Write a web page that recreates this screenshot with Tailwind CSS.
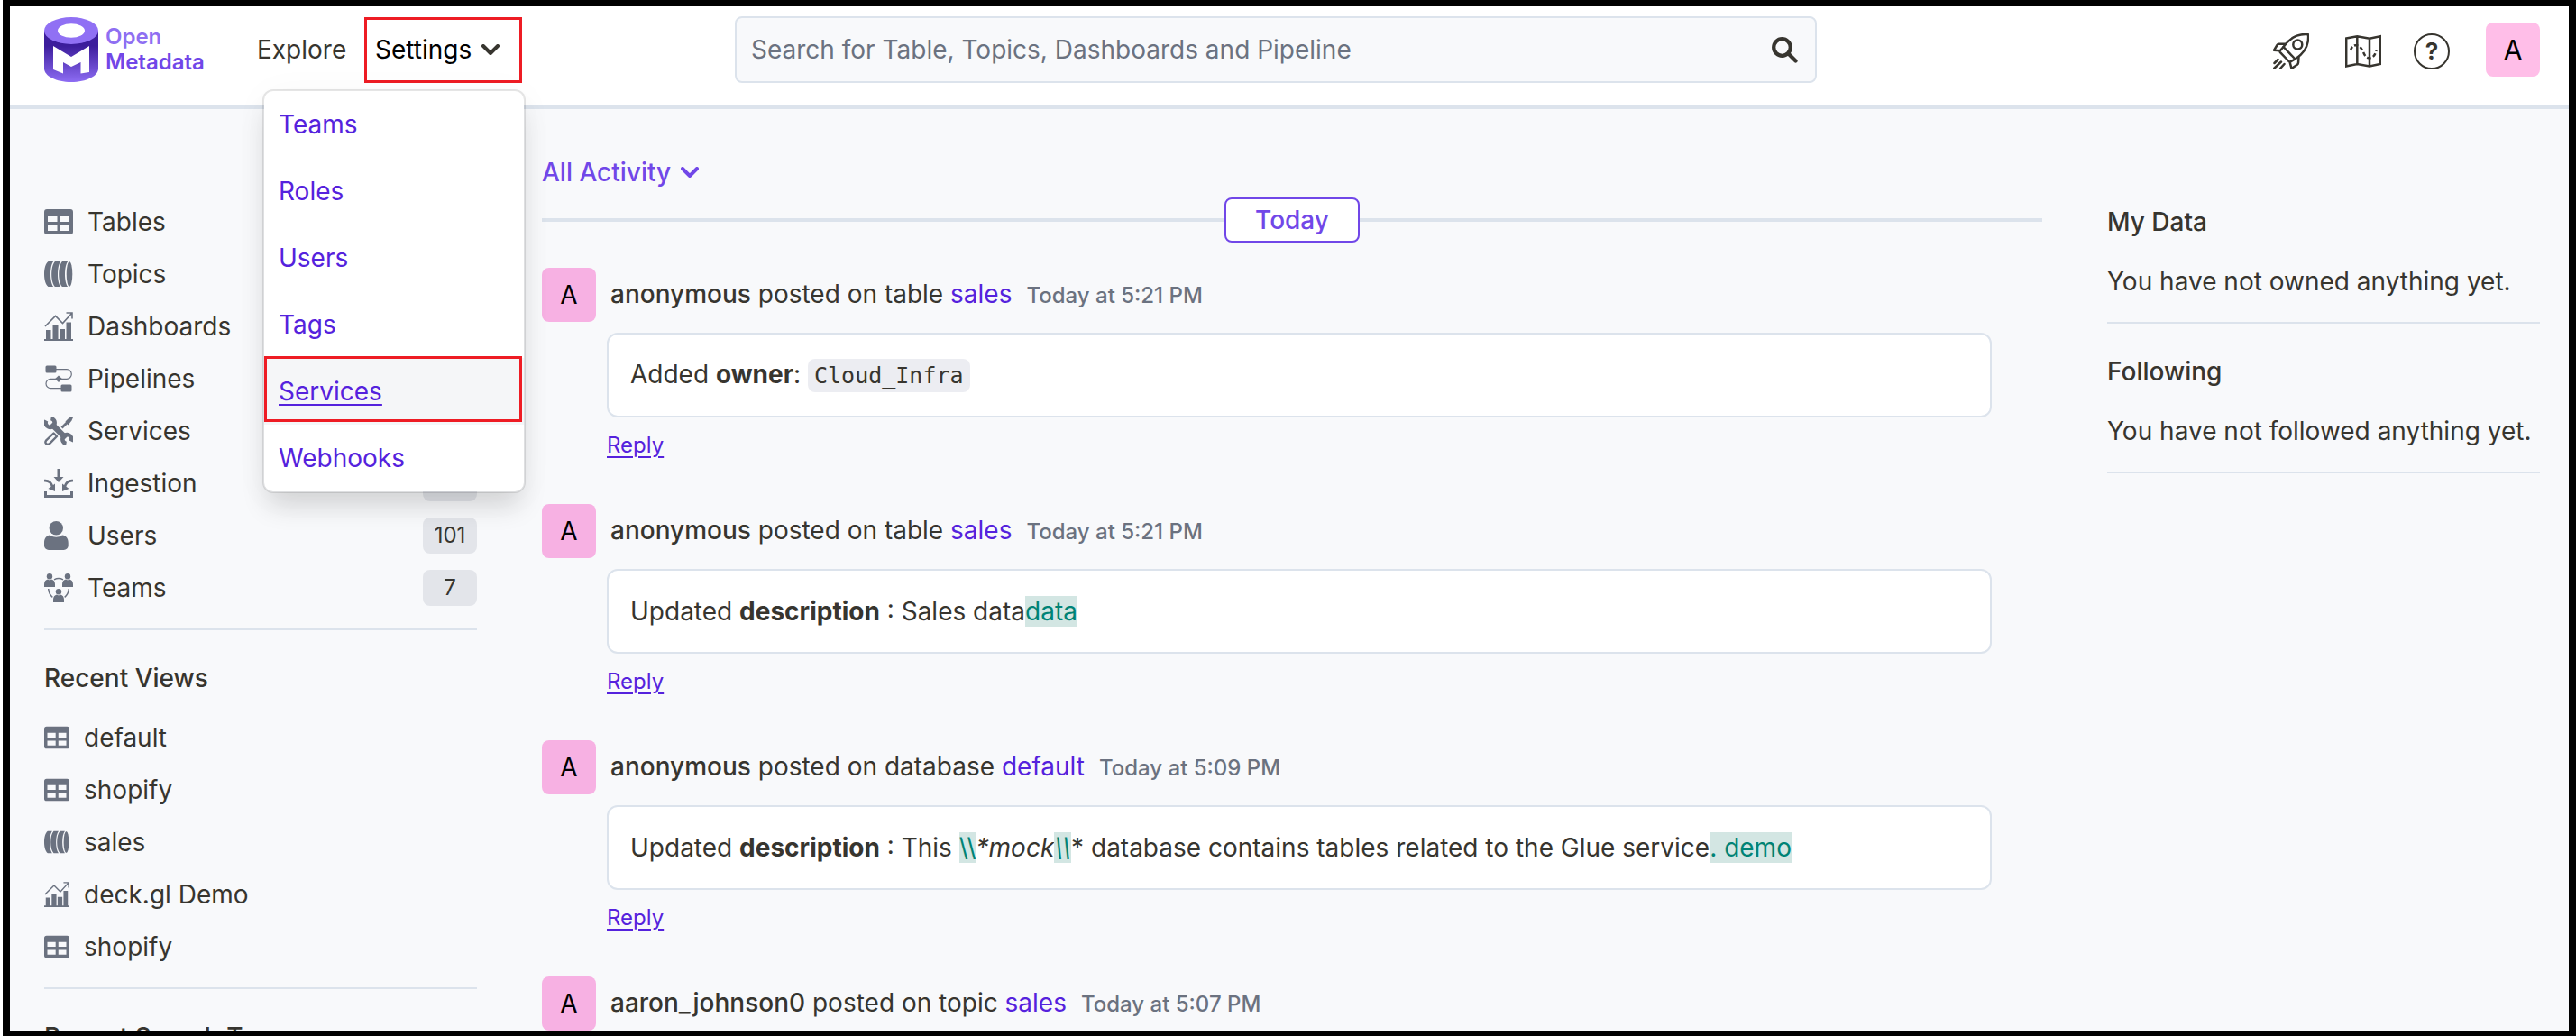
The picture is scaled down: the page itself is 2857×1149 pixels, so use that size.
<!DOCTYPE html>
<html lang="en">
<head>
<meta charset="utf-8">
<title>OpenMetadata</title>
<script src="https://cdn.jsdelivr.net/npm/@tailwindcss/browser@4"></script>
</head>
<body class="bg-white font-['Inter',sans-serif] text-[28px] leading-10 text-[#37352f]">
<svg class="hidden" aria-hidden="true">
  <symbol id="i-table" viewBox="0 0 32 32"><path fill="currentColor" fill-rule="evenodd" d="M3 2h26a3 3 0 0 1 3 3v22a3 3 0 0 1-3 3H3a3 3 0 0 1-3-3V5a3 3 0 0 1 3-3zM4 10v6h10.500v-6zM18 10v6h10v-6zM4 20v6h10.500v-6zM18 20v6h10v-6z"/></symbol>
  <symbol id="i-topic" viewBox="0 0 32 32"><g fill="currentColor"><path d="M4.500 2H10.200C6 7 6 25 10.200 30H4.500C-1.500 26-1.500 6 4.500 2z"/><path d="M12 2h6.200C14 7 14 25 18.200 30H12C7 25 7 7 12 2z"/><path d="M20 2h6.200C22 7 22 25 26.200 30H20C15 25 15 7 20 2z"/><ellipse cx="28" cy="16" rx="3.300" ry="13.800"/></g></symbol>
  <symbol id="i-chart" viewBox="0 0 32 32"><path fill="currentColor" d="M0 30h32v2H0zM2 20h5.500v10H2zM9.500 15h6v15h-6zM17 19h6v11h-6zM24.500 11.500H30V30h-5.500z"/><path fill="none" stroke="currentColor" stroke-width="1.600" d="M1 16 12.500 4.500l8 8L31 1M24.500 1H31v6.500"/></symbol>
  <symbol id="i-pipe" viewBox="0 0 32 32"><g fill="currentColor"><rect x="1.500" y="1.500" width="12" height="8" rx="1.500"/><rect x="18.500" y="22.500" width="12" height="8" rx="1.500"/><path d="m16 12.500 4 3.800-4 3.800-4-3.800z"/></g><path fill="none" stroke="currentColor" stroke-width="1.200" d="M13 5.700h12a5.300 5.300 0 0 1 0 10.600H7.200a5.200 5.200 0 0 0 0 10.400H19"/></symbol>
  <symbol id="i-tools" viewBox="0 0 32 32"><g fill="none" stroke="currentColor"><path stroke-width="6.500" d="m8 8 16 16"/><path stroke-width="4.500" d="M2.300 4.500A5 5 0 1 0 7.500 2"/><path stroke-width="4.500" d="M29.700 27.500A5 5 0 1 0 24.500 30"/><path stroke-width="2.800" d="m19.500 12.500 6-6"/><path stroke-width="2.400" stroke-linejoin="round" d="m10.500 18.500 3.500 3.500-8.300 8.300c-2.600 1.800-5.500-1-3.700-3.600z"/></g><path fill="currentColor" d="m23.500 5.500 4-4L31 0l1 1-1.500 3.500-4 5z"/></symbol>
  <symbol id="i-ingest" viewBox="0 0 32 32"><path fill="currentColor" d="M0 25h3v4h26v-4h3v7H0zM14.500 0h3v9h4L16 15l-5.500-6h4zM12 16.500V25l-7.500-3zM20 16.500V25l7.500-3z"/><path fill="none" stroke="currentColor" stroke-width="2.800" d="M0 13.200c5-.5 8 2.300 9.500 7.300M32 13.200c-5-.5-8 2.300-9.500 7.300"/></symbol>
  <symbol id="i-user" viewBox="0 0 32 32"><g fill="currentColor"><circle cx="13.300" cy="7.700" r="7.700"/><path d="M6.500 15.500c4.500 3 9 3 13.500 0 4.500.5 6.700 4 6.700 8.500v3a5 5 0 0 1-5 5H5a5 5 0 0 1-5-5v-3c0-4.500 2-8 6.500-8.500z"/></g></symbol>
  <symbol id="i-team" viewBox="0 0 32 32"><g fill="currentColor"><circle cx="6" cy="3.200" r="3.200"/><path d="M0 15v-3c0-3 1.500-5 4-5.500l2 1 2-1c2.500.5 4 2.500 4 5.500v3z"/><circle cx="26" cy="3.200" r="3.200"/><path d="M20 15v-3c0-3 1.500-5 4-5.500l2 1 2-1c2.500.5 4 2.500 4 5.500v3z"/><circle cx="16" cy="20.200" r="3.200"/><path d="M10 32v-3c0-3 1.500-5 4-5.500l2 1 2-1c2.500.5 4 2.500 4 5.500v3z"/></g><path fill="none" stroke="currentColor" stroke-width="1.500" d="M11 6.800c3-1.500 7-1.500 10 0M4.700 17c.3 4 1.800 7 4.600 9.300M27.300 17c-.3 4-1.800 7-4.600 9.300"/></symbol>
  <symbol id="i-down" viewBox="0 0 20 12"><path fill="none" stroke="currentColor" stroke-width="4" stroke-linecap="round" stroke-linejoin="round" d="m2 2 8 8 8-8"/></symbol>
</svg>

<div class="relative ml-[3px] flex h-screen flex-col overflow-hidden border-x-8 border-t-[7px] border-b-[6px] border-black bg-[#f8f9fb]">

  <header class="relative z-10 flex shrink-0 items-center border-b-4 border-[#dce3ec] bg-white pr-8 pb-[14px] pl-[38px]">
    <a href="#" class="flex h-24 w-[178px] shrink-0 items-center gap-2" aria-label="Open Metadata">
      <svg class="h-[72px] w-[60px] shrink-0" viewBox="0 0 60 72">
        <defs><linearGradient id="lg" x1="0" y1="0" x2="0" y2="1"><stop offset="0.300" stop-color="#3c1d9c"/><stop offset="1" stop-color="#8d6cf3"/></linearGradient></defs>
        <path fill="url(#lg)" d="M0 15h60v42c0 8.300-13.400 15-30 15S0 65.300 0 57z"/>
        <ellipse cx="30" cy="15" rx="30" ry="15" fill="#9070f4"/>
        <ellipse cx="30" cy="15" rx="15" ry="7.800" fill="#fff"/>
        <path fill="#fff" d="m10 32 20 12 20-12v29l-9.500 1.500V50L30 55l-9-5v12.500L10 58z"/>
      </svg>
      <span class="text-2xl leading-7 font-semibold text-[#7147e8]"><span class="block text-[#8f6ff2]">Open</span><span class="block">Metadata</span></span>
    </a>
    <nav class="ml-[58px] flex shrink-0 items-center">
      <a href="#" class="w-[119px]">Explore</a>
      <div class="relative">
        <button class="flex h-[73px] w-[175px] items-center gap-[11px] border-3 border-[#ee1c24] pl-[9px] text-black" aria-expanded="true">Settings<svg class="h-3 w-5 text-[#37352f]"><use href="#i-down"/></svg></button>
        <ul class="absolute top-20 -right-1 w-[292px] overflow-hidden rounded-xl border-2 border-black/10 bg-white bg-clip-padding text-[#5522dd] shadow-[0_20px_30px_-6px_rgba(0,0,0,0.14),0_4px_40px_rgba(0,0,0,0.03)]">
          <li><a href="#" class="flex h-[74px] items-center px-4">Teams</a></li>
          <li><a href="#" class="flex h-[74px] items-center px-4">Roles</a></li>
          <li><a href="#" class="flex h-[74px] items-center px-4">Users</a></li>
          <li><a href="#" class="flex h-[74px] items-center px-4">Tags</a></li>
          <li class="relative"><a href="#" class="flex h-[74px] items-center bg-[#f5f6f8] px-4 underline decoration-2 underline-offset-4">Services</a><span class="pointer-events-none absolute -top-[2px] right-[2px] bottom-[3px] left-0 border-3 border-[#ee1c24]"></span></li>
          <li><a href="#" class="flex h-[74px] items-center px-4">Webhooks</a></li>
        </ul>
      </div>
    </nav>
    <form class="mr-10 ml-[236px] flex h-[74px] max-w-[1200px] flex-1 items-center rounded-lg border-2 border-[#dce3ec] bg-[#f8f9fb] pr-[19px] pl-4">
      <input type="text" aria-label="Search" placeholder="Search for Table, Topics, Dashboards and Pipeline" class="min-w-0 flex-1 bg-transparent outline-none placeholder:text-[#6b7280]">
      <button type="button" aria-label="Search"><svg class="size-[29px]" viewBox="0 0 29 29"><g fill="none" stroke="currentColor" stroke-width="4.300"><circle cx="11.500" cy="11.500" r="9.300"/><path stroke-linecap="round" d="m18.500 18.500 8 8"/></g></svg></button>
    </form>
    <div class="ml-auto flex shrink-0 items-center">
      <div class="mt-1 mr-10 flex items-center">
        <button class="mr-10" aria-label="What's new"><svg class="size-10" viewBox="0 0 40 40" fill="none" stroke="currentColor" stroke-width="2.500" stroke-linejoin="round" stroke-linecap="round"><path d="M39 1.200C27 0 18.500 5 11.500 15L24.500 28.500C35 22 40 13 39 1.200z"/><circle cx="27.300" cy="12.500" r="5"/><path d="m11.500 15-3.500 4c-.6.700-.6 1.500 0 2.100L17.500 31c.8.800 1.600.8 2.300.2l4.700-2.700M14 11.800H6.500c-1 0-1.500.4-2 1.200L1 18.800l7 .5M28.500 26.500l-.5 6.300c0 .9-.5 1.600-1.300 2L20.500 39 18.500 31.500M1.500 33l4-4M1 39l8-7.500M8 39l4.500-5"/></svg></button>
        <button class="mr-9" aria-label="Tour"><svg class="size-10" viewBox="0 0 40 40" fill="none" stroke="currentColor" stroke-width="2.500"><path d="m1.200 5.500 12.100-2.200L27 5.700l11.800-2.400V34L27 36.500 13.300 34 1.200 36.500zM13.300 3.500V34M27 5.700v30.800"/><path stroke-dasharray="4.500 2.500" d="M6 19c1.500-5.500 5-7 9-5 5 2.500 5 11.500 10 13 5.500 1.500 8.500-3 9.500-8.500"/></svg></button>
        <button class="flex size-10 items-center justify-center rounded-full border-[2.5px] border-[#37352f] text-[26px] font-bold" aria-label="Help">?</button>
      </div>
      <button class="flex size-15 items-center justify-center rounded-lg bg-[#ffbee8] text-[30px] text-black">A</button>
    </div>
  </header>

  <main class="flex min-h-0 flex-1 items-start gap-[72px] pr-8 pl-[38px]">
    <aside class="w-[480px] shrink-0 pt-[105px]">
      <ul class="flex flex-col gap-[18px]">
        <li class="flex items-center justify-between"><a href="#" class="flex items-center gap-4"><svg class="size-8 text-[#6b7280]"><use href="#i-table"/></svg>Tables</a></li>
        <li class="flex items-center justify-between"><a href="#" class="flex items-center gap-4"><svg class="size-8 text-[#6b7280]"><use href="#i-topic"/></svg>Topics</a></li>
        <li class="flex items-center justify-between"><a href="#" class="flex items-center gap-4"><svg class="size-8 text-[#6b7280]"><use href="#i-chart"/></svg>Dashboards</a></li>
        <li class="flex items-center justify-between"><a href="#" class="flex items-center gap-4"><svg class="size-8 text-[#6b7280]"><use href="#i-pipe"/></svg>Pipelines</a></li>
        <li class="flex items-center justify-between"><a href="#" class="flex items-center gap-4"><svg class="size-8 text-[#6b7280]"><use href="#i-tools"/></svg>Services</a></li>
        <li class="flex items-center justify-between"><a href="#" class="flex items-center gap-4"><svg class="size-8 text-[#6b7280]"><use href="#i-ingest"/></svg>Ingestion</a><span class="h-10 w-15 rounded-lg bg-[#e3e5ea]"></span></li>
        <li class="flex items-center justify-between"><a href="#" class="flex items-center gap-4"><svg class="size-8 text-[#6b7280]"><use href="#i-user"/></svg>Users</a><span class="h-10 w-15 rounded-lg bg-[#e3e5ea] text-center text-2xl leading-10">101</span></li>
        <li class="flex items-center justify-between"><a href="#" class="flex items-center gap-4"><svg class="size-8 text-[#6b7280]"><use href="#i-team"/></svg>Teams</a><span class="h-10 w-15 rounded-lg bg-[#e3e5ea] text-center text-2xl leading-10">7</span></li>
      </ul>
      <hr class="mt-[25px] border-t-2 border-[#dce3ec]">
      <h2 class="mt-[33px] font-medium">Recent Views</h2>
      <ul class="mt-[26px] flex flex-col gap-[18px]">
        <li><a href="#" class="flex items-center gap-4"><svg class="size-7 text-[#6b7280]"><use href="#i-table"/></svg>default</a></li>
        <li><a href="#" class="flex items-center gap-4"><svg class="size-7 text-[#6b7280]"><use href="#i-table"/></svg>shopify</a></li>
        <li><a href="#" class="flex items-center gap-4"><svg class="size-7 text-[#6b7280]"><use href="#i-topic"/></svg>sales</a></li>
        <li><a href="#" class="flex items-center gap-4"><svg class="size-7 text-[#6b7280]"><use href="#i-chart"/></svg>deck.gl Demo</a></li>
        <li><a href="#" class="flex items-center gap-4"><svg class="size-7 text-[#6b7280]"><use href="#i-table"/></svg>shopify</a></li>
      </ul>
      <hr class="mt-[25px] border-t-2 border-[#dce3ec]">
      <h2 class="mt-[33px] font-medium">Recent Search Terms</h2>
    </aside>

    <section class="min-w-0 flex-1 pt-[50px]">
      <button class="flex items-center gap-[11px] font-medium text-[#7147e8]">All Activity<svg class="h-3 w-5"><use href="#i-down"/></svg></button>
      <div class="mt-2 flex items-center">
        <span class="h-1 flex-1 bg-[#dce3ec]"></span>
        <span class="flex h-[50px] w-[150px] items-center justify-center rounded-lg border-2 border-[#7147e8] bg-white font-medium text-[#7147e8]">Today</span>
        <span class="h-1 flex-1 bg-[#dce3ec]"></span>
      </div>
      <div class="mt-7 flex flex-col gap-[50px]">
        <article>
          <div class="flex items-center gap-4">
            <span class="flex size-15 items-center justify-center rounded-lg bg-[#f7b1e3] text-black">A</span>
            <p><span class="font-medium">anonymous</span> posted on table <a href="#" class="text-[#5522dd]">sales</a><time class="ml-4 text-2xl leading-10 font-medium text-[#6b7280]">Today at 5:21 PM</time></p>
          </div>
          <div class="mt-3 mr-14 ml-[72px] flex h-[94px] items-center rounded-xl border-2 border-[#dce3ec] bg-white px-6"><p>Added <b class="font-bold">owner</b>: <code class="rounded-lg bg-[#ecedf2] px-[7px] py-1 font-['DejaVu_Sans_Mono',monospace] text-[25px]">Cloud_Infra</code></p></div>
          <a href="#" class="mt-4 ml-[72px] block w-fit text-2xl leading-[30px] text-[#5522dd] underline decoration-2 underline-offset-4">Reply</a>
        </article>
        <article>
          <div class="flex items-center gap-4">
            <span class="flex size-15 items-center justify-center rounded-lg bg-[#f7b1e3] text-black">A</span>
            <p><span class="font-medium">anonymous</span> posted on table <a href="#" class="text-[#5522dd]">sales</a><time class="ml-4 text-2xl leading-10 font-medium text-[#6b7280]">Today at 5:21 PM</time></p>
          </div>
          <div class="mt-3 mr-14 ml-[72px] flex h-[94px] items-center rounded-xl border-2 border-[#dce3ec] bg-white px-6"><p>Updated <b class="font-bold">description</b> : Sales data<ins class="bg-[#d3e6e3] text-[#008376] no-underline">data</ins></p></div>
          <a href="#" class="mt-4 ml-[72px] block w-fit text-2xl leading-[30px] text-[#5522dd] underline decoration-2 underline-offset-4">Reply</a>
        </article>
        <article>
          <div class="flex items-center gap-4">
            <span class="flex size-15 items-center justify-center rounded-lg bg-[#f7b1e3] text-black">A</span>
            <p><span class="font-medium">anonymous</span> posted on database <a href="#" class="text-[#5522dd]">default</a><time class="ml-4 text-2xl leading-10 font-medium text-[#6b7280]">Today at 5:09 PM</time></p>
          </div>
          <div class="mt-3 mr-14 ml-[72px] flex h-[94px] items-center rounded-xl border-2 border-[#dce3ec] bg-white px-6"><p>Updated <b class="font-bold">description</b> : This <ins class="bg-[#d3e6e3] text-[#008376] no-underline">\\</ins><em>*mock<ins class="bg-[#d3e6e3] text-[#008376] no-underline">\\</ins></em>* database contains tables related to the Glue service<ins class="bg-[#d3e6e3] text-[#008376] no-underline">. demo</ins></p></div>
          <a href="#" class="mt-4 ml-[72px] block w-fit text-2xl leading-[30px] text-[#5522dd] underline decoration-2 underline-offset-4">Reply</a>
        </article>
        <article>
          <div class="flex items-center gap-4">
            <span class="flex size-15 items-center justify-center rounded-lg bg-[#f7b1e3] text-black">A</span>
            <p><span class="font-medium">aaron_johnson0</span> posted on topic <a href="#" class="text-[#5522dd]">sales</a><time class="ml-4 text-2xl leading-10 font-medium text-[#6b7280]">Today at 5:07 PM</time></p>
          </div>
        </article>
      </div>
    </section>

    <aside class="w-[480px] shrink-0 pt-[105px]">
      <h2 class="font-medium">My Data</h2>
      <p class="mt-[26px]">You have not owned anything yet.</p>
      <hr class="mt-[25px] border-t-2 border-[#dce3ec]">
      <h2 class="mt-[33px] font-medium">Following</h2>
      <p class="mt-[26px]">You have not followed anything yet.</p>
      <hr class="mt-[25px] border-t-2 border-[#dce3ec]">
    </aside>
  </main>
</div>
</body>
</html>
